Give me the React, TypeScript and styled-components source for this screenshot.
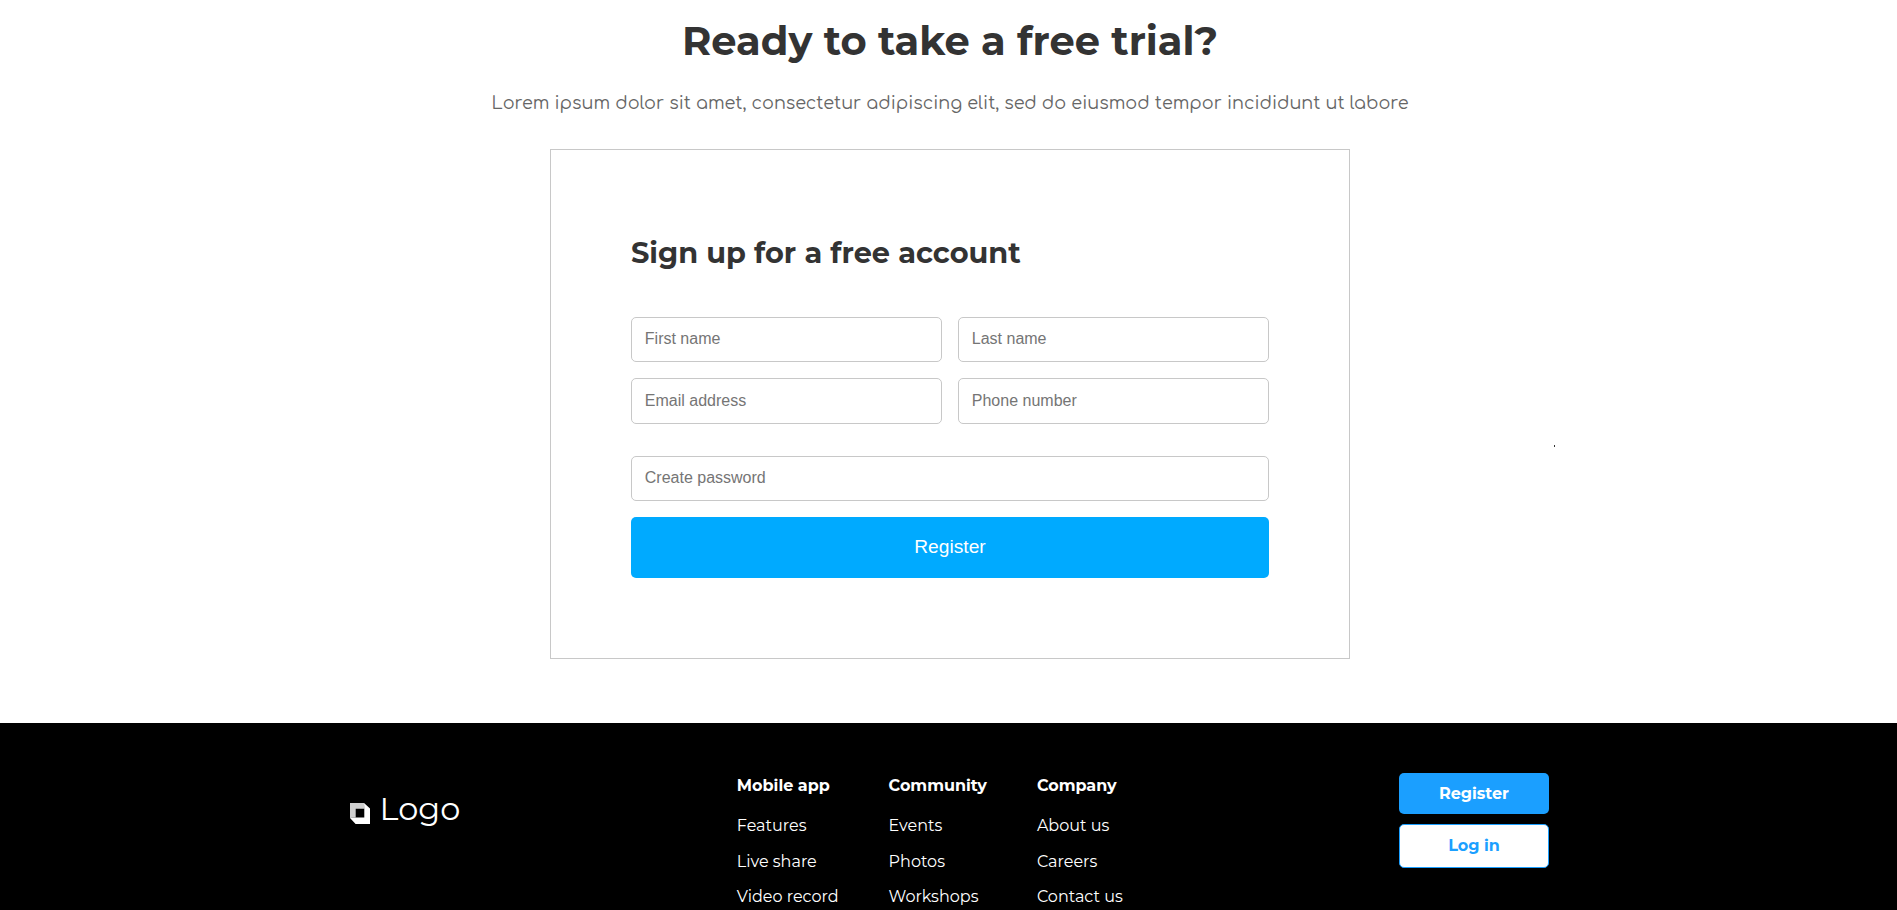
import React from "react";
import styled, { createGlobalStyle } from "styled-components";

const GlobalStyle = createGlobalStyle`
  * { box-sizing: border-box; }
  body {
    margin: 0;
    background: #fff;
    overflow: hidden;
    font-family: Montserrat, Inter, "Open Sans", sans-serif;
  }
`;

const Page = styled.div`
  position: relative;
  display: flex;
  flex-direction: column;
  width: 1900px;
  height: 910px;
  overflow: hidden;
`;

const Trial = styled.main`
  display: flex;
  flex-direction: column;
  align-items: center;
  height: 723px;
  padding-top: 16px;
`;

const Title = styled.h1`
  margin: 0;
  color: #333;
  font-size: 40px;
  font-weight: 700;
  line-height: 50px;
  white-space: nowrap;
`;

const Lead = styled.p`
  margin: 25px 0 34px;
  color: #666;
  font-family: Comfortaa, Inter, sans-serif;
  font-size: 17.6px;
  line-height: 24px;
  white-space: nowrap;
`;

const Card = styled.form`
  display: flex;
  flex-direction: column;
  width: 800px;
  height: 510px;
  padding: 85px 80px 80px;
  border: 1px solid #c8c8c8;
`;

const CardTitle = styled.h2`
  margin: 0 0 47px;
  color: #333;
  font-size: 28.8px;
  font-weight: 700;
  line-height: 35px;
`;

const FieldRow = styled.div<{ $gapAfter?: number }>`
  display: flex;
  gap: 16px;
  margin-bottom: ${(p) => p.$gapAfter ?? 16}px;
`;

const Field = styled.input<{ $tall?: boolean }>`
  flex: 1;
  min-width: 0;
  height: ${(p) => (p.$tall ? 46 : 45)}px;
  padding: 0 12.8px ${(p) => (p.$tall ? 0 : 2)}px;
  border: 1px solid #c8c8c8;
  border-radius: 5px;
  outline: none;
  background: #fff;
  font: 16px "Liberation Sans", Arial, sans-serif;

  &::placeholder { color: #757575; }
`;

const Submit = styled.button`
  height: 61px;
  padding: 0 0 2px;
  border: 0;
  border-radius: 5px;
  background: #00aaff;
  color: #fff;
  font: 19.2px "Liberation Sans", Arial, sans-serif;
`;

const Footer = styled.footer`
  flex: 1;
  padding: 50px 350px 0;
  background: #000;
  color: #fff;
`;

const FooterInner = styled.div`
  display: grid;
  grid-template-columns: 386.8px 1fr 150px;
  width: 1199px;
`;

const Brand = styled.div`
  display: flex;
  align-items: flex-start;
  gap: 9.6px;
  padding-top: 16px;

  svg { margin-top: 14px; }
`;

const BrandName = styled.span`
  font-size: 32px;
  line-height: 39px;
`;

const Columns = styled.nav`
  display: grid;
  grid-template-columns: 151.8px 148.3px 120px;
  padding-top: 3px;
`;

const Column = styled.div`
  display: flex;
  flex-direction: column;
  gap: 16.6px;
`;

const ColumnTitle = styled.strong`
  margin-bottom: 4.4px;
  font-size: 16px;
  font-weight: 700;
  line-height: 19px;
  white-space: nowrap;
`;

const ColumnLink = styled.a`
  color: #fff;
  font-size: 16px;
  line-height: 19px;
  white-space: nowrap;
`;

const Actions = styled.div`
  display: flex;
  flex-direction: column;
  gap: 10px;
`;

const Action = styled.button<{ $outline?: boolean }>`
  height: ${(p) => (p.$outline ? 44 : 41)}px;
  padding: ${(p) => (p.$outline ? "0 0 1px" : "0")};
  border: ${(p) => (p.$outline ? "1px solid #1b9fff" : "0")};
  border-radius: 5px;
  background: ${(p) => (p.$outline ? "#fff" : "#1b9fff")};
  color: ${(p) => (p.$outline ? "#1b9fff" : "#fff")};
  font-family: inherit;
  font-size: 16px;
  font-weight: 700;
  line-height: 19px;
`;

const Speck = styled.i`
  position: absolute;
  left: 1554px;
  top: 445px;
  width: 1px;
  height: 2px;
  background: #333;
`;

const LogoMark = () => (
  <svg width="20" height="21" viewBox="0 0 20 21">
    <path fill="#cfcfcf" d="M0 0H14L14.5 5.7H5.7V14.5L0 15Z" />
    <path fill="#fff" d="M14 0L20 5.6V21H5.6L0 15L5.7 14.5H14.3V5.7Z" />
  </svg>
);

const columns = [
  { title: "Mobile app", links: ["Features", "Live share", "Video record"] },
  { title: "Community", links: ["Events", "Photos", "Workshops"] },
  { title: "Company", links: ["About us", "Careers", "Contact us"] },
];

export default function App() {
  return (
    <Page>
      <GlobalStyle />
      <Trial>
        <Title>Ready to take a free trial?</Title>
        <Lead>
          Lorem ipsum dolor sit amet, consectetur adipiscing elit, sed do eiusmod tempor incididunt ut labore
        </Lead>
        <Card>
          <CardTitle>Sign up for a free account</CardTitle>
          <FieldRow>
            <Field placeholder="First name" />
            <Field placeholder="Last name" />
          </FieldRow>
          <FieldRow $gapAfter={32}>
            <Field $tall placeholder="Email address" />
            <Field $tall placeholder="Phone number" />
          </FieldRow>
          <FieldRow>
            <Field type="password" placeholder="Create password" />
          </FieldRow>
          <Submit type="button">Register</Submit>
        </Card>
      </Trial>
      <Footer>
        <FooterInner>
          <Brand>
            <LogoMark />
            <BrandName>Logo</BrandName>
          </Brand>
          <Columns>
            {columns.map(({ title, links }) => (
              <Column key={title}>
                <ColumnTitle>{title}</ColumnTitle>
                {links.map((label) => (
                  <ColumnLink key={label}>{label}</ColumnLink>
                ))}
              </Column>
            ))}
          </Columns>
          <Actions>
            <Action type="button">Register</Action>
            <Action type="button" $outline>Log in</Action>
          </Actions>
        </FooterInner>
      </Footer>
      <Speck />
    </Page>
  );
}
